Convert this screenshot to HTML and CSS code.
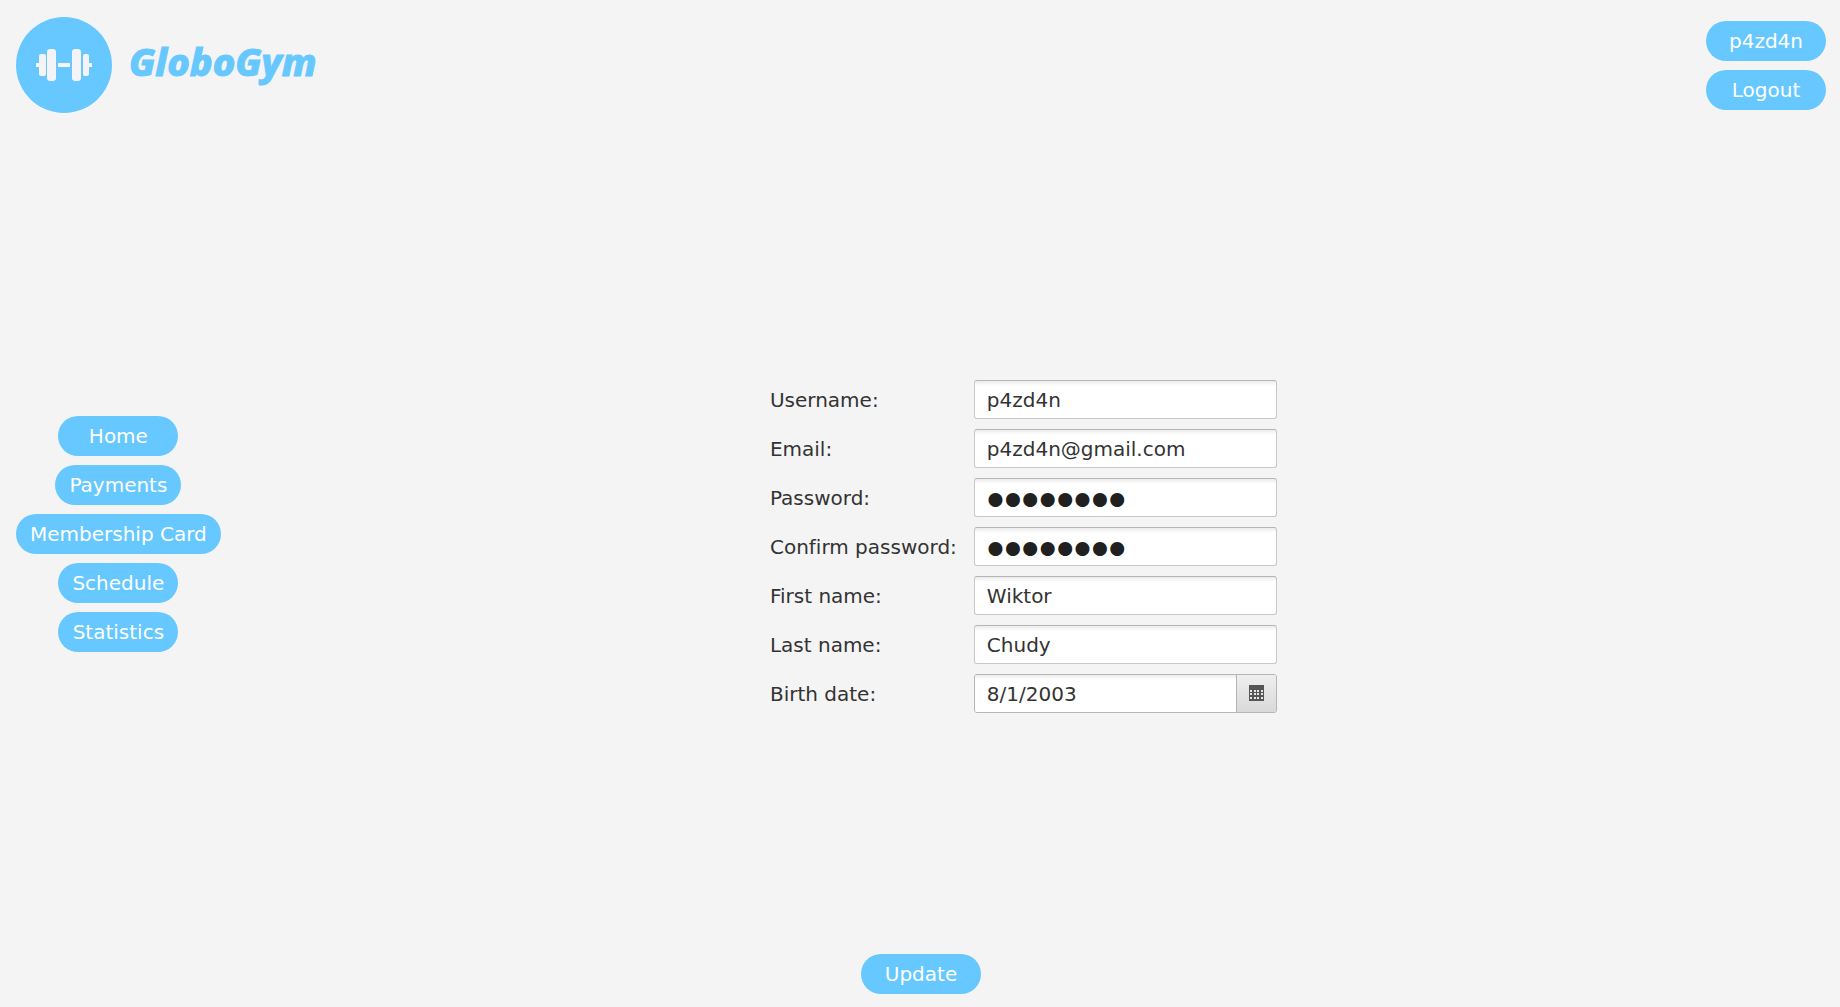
FILE: index.html
```html
<!DOCTYPE html>
<html lang="en">
<head>
<meta charset="utf-8">
<title>GloboGym</title>
<link rel="stylesheet" href="styles.css">
</head>
<body>
<div class="app">
  <header class="header">
    <div class="brand">
      <svg class="brand-mark" viewBox="0 0 96 96" aria-hidden="true">
        <circle cx="48" cy="48" r="48" fill="#66c8ff"/>
        <g fill="#f4f4f4">
          <rect x="20" y="46" width="5" height="4"/>
          <rect x="23" y="37" width="7" height="22" rx="2"/>
          <rect x="31" y="32" width="9" height="32" rx="3"/>
          <rect x="42" y="46" width="12" height="4"/>
          <rect x="56" y="32" width="9" height="32" rx="3"/>
          <rect x="67" y="37" width="6" height="22" rx="2"/>
          <rect x="71" y="46" width="5" height="4"/>
        </g>
      </svg>
      <span class="brand-name">GloboGym</span>
    </div>
    <div class="account">
      <button class="pill" type="button">p4zd4n</button>
      <button class="pill" type="button">Logout</button>
    </div>
  </header>

  <div class="content">
    <nav class="menu">
      <button class="pill" type="button">Home</button>
      <button class="pill" type="button">Payments</button>
      <button class="pill" type="button">Membership Card</button>
      <button class="pill" type="button">Schedule</button>
      <button class="pill" type="button">Statistics</button>
    </nav>
    <main class="main">
      <form class="profile" id="profile">
        <label for="username">Username:</label>
        <input class="field" id="username" type="text" value="p4zd4n">
        <label for="email">Email:</label>
        <input class="field" id="email" type="email" value="p4zd4n@gmail.com">
        <label for="password">Password:</label>
        <input class="field secret" id="password" type="password" value="password">
        <label for="confirm">Confirm password:</label>
        <input class="field secret" id="confirm" type="password" value="password">
        <label for="first">First name:</label>
        <input class="field" id="first" type="text" value="Wiktor">
        <label for="last">Last name:</label>
        <input class="field" id="last" type="text" value="Chudy">
        <label for="birth">Birth date:</label>
        <div class="date">
          <input class="field" id="birth" type="text" value="8/1/2003">
          <button class="date-button" type="button" aria-label="Open calendar">
            <svg width="15" height="16" viewBox="0 0 15 16" aria-hidden="true">
              <path fill="#555" d="M0 0h15v16H0z"/>
              <path fill="#e6e6e6" d="M1 5h2v2H1zM5 5h2v2H5zM8 5h2v2H8zM12 5h2v2h-2zM1 8h2v2H1zM5 8h2v2H5zM8 8h2v2H8zM12 8h2v2h-2zM1 12h2v2H1zM5 12h2v2H5zM8 12h2v2H8zM12 12h2v2h-2z"/>
            </svg>
          </button>
        </div>
      </form>
    </main>
  </div>

  <footer class="footer">
    <button class="pill" type="submit" form="profile">Update</button>
  </footer>
</div>
</body>
</html>
```
FILE: styles.css
```css
* {
  box-sizing: border-box;
}

body {
  margin: 0;
  background: #f4f4f4;
  color: #333;
  font: 20px/24px "DejaVu Sans", sans-serif;
  font-variant-ligatures: none;
}

.app {
  display: flex;
  flex-direction: column;
  min-height: 100vh;
  padding: 17px 14px 13px 16px;
}

.header {
  display: flex;
  justify-content: space-between;
  align-items: center;
}

.brand {
  display: flex;
  align-items: center;
  gap: 17px;
}

.brand-mark {
  width: 96px;
  height: 96px;
}

.brand-name {
  padding-bottom: 8px;
  color: #66c8ff;
  font: italic 800 38px/48px "Noto Sans", sans-serif;
  -webkit-text-stroke: 1px #66c8ff;
}

.account,
.menu {
  display: flex;
  flex-direction: column;
  align-items: center;
  gap: 9px;
}

.pill {
  min-width: 120px;
  height: 40px;
  padding: 0 14px;
  border: 0;
  border-radius: 20px;
  background: #66c8ff;
  color: #fff;
  font: inherit;
  cursor: pointer;
}

.content {
  display: flex;
  flex: 1;
  align-items: center;
}

.main {
  display: flex;
  flex: 1;
  justify-content: center;
  padding-top: 25px;
}

.profile {
  display: grid;
  grid-template-columns: auto 303px;
  align-items: center;
  gap: 10px 17px;
}

.profile label {
  padding-top: 2px;
}

.field {
  width: 100%;
  height: 39px;
  padding: 2px 12px 0;
  border: 1px solid #c8c8c8;
  border-top-color: #b5b5b5;
  border-radius: 3px;
  background: linear-gradient(#ececec, #fff 5px);
  color: #333;
  font: inherit;
}

.secret {
  padding-top: 0;
  color: #202020;
  font: 900 30px/36px Lato, sans-serif;
}

.date {
  display: flex;
  height: 39px;
  overflow: hidden;
  border: 1px solid #b5b5b5;
  border-radius: 3px;
}

.date .field {
  flex: 1;
  min-width: 0;
  height: 100%;
  border: 0;
  border-radius: 0;
}

.date-button {
  display: flex;
  align-items: center;
  justify-content: center;
  width: 40px;
  padding: 0;
  border: 0;
  border-left: 1px solid #b5b5b5;
  background: linear-gradient(#efefef, #d9d9d9);
  cursor: pointer;
}

.footer {
  display: flex;
  justify-content: center;
}
```
